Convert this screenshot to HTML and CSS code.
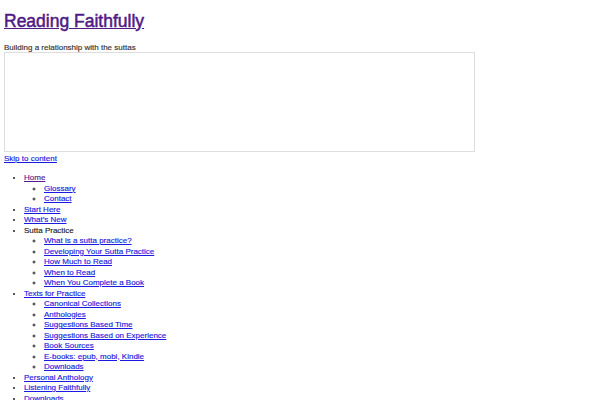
FILE: index.html
```html
<!DOCTYPE html>
<html>
<head>
    <meta charset="UTF-8">
    <title>Reading Faithfully</title>
    <link rel="stylesheet" href="styles.css">
</head>
<body>
    <div id="header">
        <h1 class="siteTitle"><a href="#" class="visited">Reading Faithfully</a></h1>
        <div class="siteDescription">Building a relationship with the suttas</div>
        <div class="headerImage"></div>
    </div>
    <a href="#" class="skipLink">Skip to content</a>
    <ul class="menu">
        <li><a href="#" class="visited">Home</a>
            <ul>
                <li><a href="#">Glossary</a></li>
                <li><a href="#">Contact</a></li>
            </ul>
        </li>
        <li><a href="#">Start Here</a></li>
        <li><a href="#">What’s New</a></li>
        <li>Sutta Practice
            <ul>
                <li><a href="#">What is a sutta practice?</a></li>
                <li><a href="#">Developing Your Sutta Practice</a></li>
                <li><a href="#">How Much to Read</a></li>
                <li><a href="#">When to Read</a></li>
                <li><a href="#">When You Complete a Book</a></li>
            </ul>
        </li>
        <li><a href="#">Texts for Practice</a>
            <ul>
                <li><a href="#">Canonical Collections</a></li>
                <li><a href="#">Anthologies</a></li>
                <li><a href="#">Suggestions Based Time</a></li>
                <li><a href="#">Suggestions Based on Experience</a></li>
                <li><a href="#">Book Sources</a></li>
                <li><a href="#">E-books: epub, mobi, Kindle</a></li>
                <li><a href="#">Downloads</a></li>
            </ul>
        </li>
        <li><a href="#">Personal Anthology</a></li>
        <li><a href="#">Listening Faithfully</a></li>
        <li><a href="#">Downloads</a></li>
    </ul>
</body>
</html>
```

FILE: styles.css
```css
body {
    margin: 4px;
    font-family: "Liberation Sans", Arial, sans-serif;
    font-size: 8px;
    line-height: 10.5px;
    color: #222;
    background: white;
    -webkit-text-stroke: 0.15px;
}
a {
    color: #1a1ae0;
}
a.visited {
    color: #551a8b;
}
.siteTitle {
    font-size: 17.5px;
    font-weight: normal;
    line-height: 21px;
    margin: 7px 0 11px 0;
    -webkit-text-stroke: 0.5px;
}
.siteTitle a {
    color: #4f1a84;
}
.siteDescription {
    color: #333;
}
.headerImage {
    width: 469px;
    height: 98px;
    border: 1px solid #ddd;
    margin-top: -2px;
}
.skipLink {
    display: inline-block;
    margin-top: 2px;
}
.menu {
    margin: 9px 0;
    padding-left: 20px;
}
.menu ul {
    margin: 0;
    padding-left: 20px;
    list-style-type: circle;
}
```
